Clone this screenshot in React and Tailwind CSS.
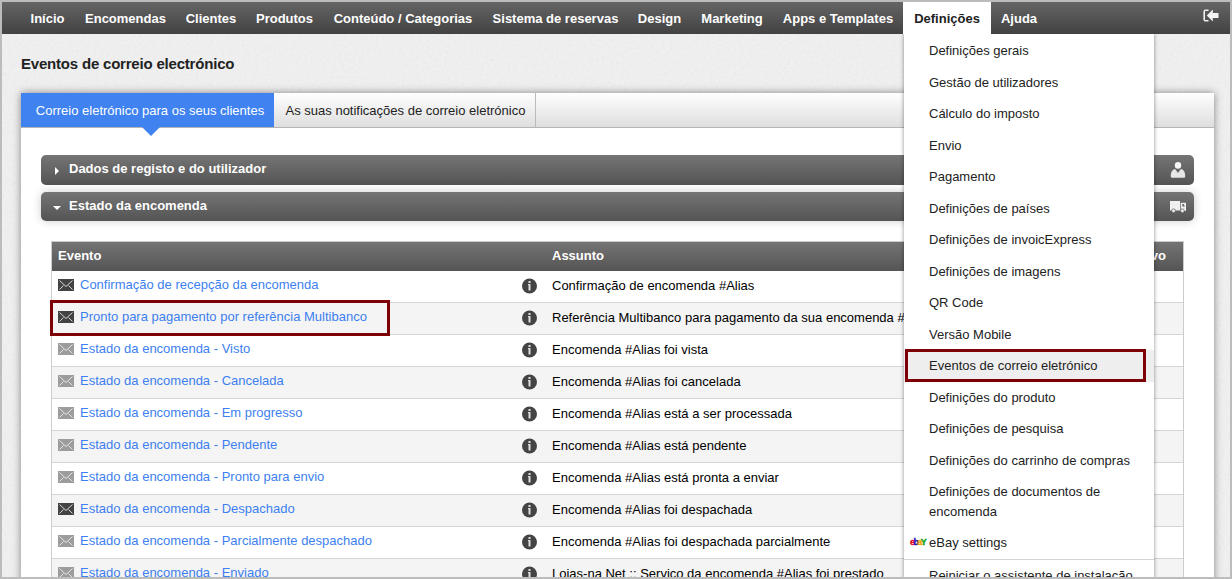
const menu = [
  { label: 'Início', width: 'w-[55px]' },
  { label: 'Encomendas', width: 'w-[101px]' },
  { label: 'Clientes', width: 'w-[70px]' },
  { label: 'Produtos', width: 'w-[77px]' },
  { label: 'Conteúdo / Categorias', width: 'w-[160px]' },
  { label: 'Sistema de reservas', width: 'w-[145px]' },
  { label: 'Design', width: 'w-[63px]' },
  { label: 'Marketing', width: 'w-[82px]' },
  { label: 'Apps e Templates', width: 'w-[130px]' },
  { label: 'Definições', width: 'w-[88px]', active: true },
  { label: 'Ajuda', width: 'w-[56px]' },
];

const settings = [
  { label: 'Definições gerais' },
  { label: 'Gestão de utilizadores' },
  { label: 'Cálculo do imposto' },
  { label: 'Envio' },
  { label: 'Pagamento' },
  { label: 'Definições de países' },
  { label: 'Definições de invoicExpress' },
  { label: 'Definições de imagens' },
  { label: 'QR Code' },
  { label: 'Versão Mobile' },
  { label: 'Eventos de correio eletrónico', current: true },
  { label: 'Definições do produto' },
  { label: 'Definições de pesquisa' },
  { label: 'Definições do carrinho de compras' },
  { label: 'Definições de documentos de encomenda' },
  { label: 'eBay settings', ebay: true },
  { label: 'Reiniciar o assistente de instalação', divider: true },
];

const events = [
  { name: 'Confirmação de recepção da encomenda', subject: 'Confirmação de encomenda #Alias', on: true },
  {
    name: 'Pronto para pagamento por referência Multibanco',
    subject: 'Referência Multibanco para pagamento da sua encomenda #Alias',
    on: true,
    marked: true,
  },
  { name: 'Estado da encomenda - Visto', subject: 'Encomenda #Alias foi vista' },
  { name: 'Estado da encomenda - Cancelada', subject: 'Encomenda #Alias foi cancelada' },
  { name: 'Estado da encomenda - Em progresso', subject: 'Encomenda #Alias está a ser processada' },
  { name: 'Estado da encomenda - Pendente', subject: 'Encomenda #Alias está pendente' },
  { name: 'Estado da encomenda - Pronto para envio', subject: 'Encomenda #Alias está pronta a enviar' },
  { name: 'Estado da encomenda - Despachado', subject: 'Encomenda #Alias foi despachada', on: true },
  { name: 'Estado da encomenda - Parcialmente despachado', subject: 'Encomenda #Alias foi despachada parcialmente' },
  { name: 'Estado da encomenda - Enviado', subject: 'Lojas-na Net :: Serviço da encomenda #Alias foi prestado' },
];

function MailIcon({ on }) {
  return (
    <svg className="block h-3 w-4 shrink-0" viewBox="0 0 16 12">
      <rect width="16" height="12" fill={on ? '#434343' : '#9c9c9c'} />
      <path
        d="M1.5 1.5 8 7.5l6.5-6M1.5 10.5l4-4M14.5 10.5l-4-4"
        fill="none"
        stroke={on ? '#d6d6d6' : '#e4e4e4'}
        strokeWidth="1"
      />
    </svg>
  );
}

function InfoIcon() {
  return (
    <svg className="block size-4 shrink-0" viewBox="0 0 16 16">
      <circle cx="8.500" cy="8" r="7.500" fill="#444" />
      <path d="M7.500 3h2v2h-2zM7 6h2.500v6.500h-2V7H7z" fill="#e0e0e0" />
    </svg>
  );
}

function UserIcon() {
  return (
    <svg className="block h-[17px] w-4" viewBox="0 0 16 17">
      <ellipse cx="8" cy="3.4" rx="3.2" ry="3.3" fill="#f6f6f6" />
      <path
        d="M.8 14.500C.6 10 2.300 7.500 5.100 6.900L8 11l2.900-4.100C13.700 7.500 15.400 10 15.200 14.500q0 1.300-1.500 1.300H2.300Q.8 15.800.8 14.500z"
        fill="#e6e6e6"
      />
    </svg>
  );
}

function TruckIcon() {
  return (
    <svg className="block h-3 w-4" viewBox="0 0 16 12">
      <path d="M0 0h10v9.500H0z" fill="#efefef" />
      <path d="M10.700 1.800H16V10h-5.300z" fill="#efefef" />
      <path d="M12.300 3h1.500l1 2.500h-2.500z" fill="#666" />
      <circle cx="3.6" cy="9.8" r="1.900" fill="#efefef" stroke="#666" strokeWidth=".8" />
      <circle cx="12.4" cy="9.8" r="1.900" fill="#efefef" stroke="#666" strokeWidth=".8" />
    </svg>
  );
}

function LogoutIcon() {
  return (
    <svg className="block h-[13px] w-4" viewBox="0 0 16 13">
      <path d="M5.500 1.300H2.500Q1.200 1.300 1.200 2.600v7.800q0 1.300 1.300 1.300h3" fill="none" stroke="#eee" strokeWidth="1.600" />
      <path d="M3.800 6.500 9.800.500v3.600h5.700v4.800H9.800v3.600z" fill="#f4f4f4" />
    </svg>
  );
}

function EbayLogo() {
  return (
    <span className="absolute left-1.5 top-2 flex text-[9px] font-bold leading-[12px] tracking-[-1.6px] [-webkit-text-stroke:0.4px]">
      <span className="text-[#e00010]">e</span>
      <span className="text-[#2a10b0]">b</span>
      <span className="text-[#f0a000]">a</span>
      <span className="text-[#10a010]">Y</span>
    </span>
  );
}

function Section({ title, open, icon }) {
  return (
    <div
      className={`flex items-center justify-between rounded-[5px] bg-linear-to-b from-[#757575] to-[#545454] pr-2 text-[13px] font-bold text-white ${
        open ? 'h-[29px] shadow-[0_0_10px_rgba(0,0,0,0.2)]' : 'h-[30px]'
      }`}
    >
      <div className="flex items-center">
        <svg className="ml-3 mt-0.5 block size-2" viewBox="0 0 8 8">
          <path d={open ? 'M0 2h8L4 6z' : 'M2 0v8l4-4z'} fill="#fff" />
        </svg>
        <span className="-mt-0.5 ml-2">{title}</span>
      </div>
      {icon}
    </div>
  );
}

function SettingsMenu() {
  return (
    <div className="absolute left-[902px] top-8 z-20 w-[250px] bg-white pt-[1.3px] shadow-[0_0_4px_rgba(0,0,0,0.45)] [clip-path:inset(0_-8px_-8px_-8px)]">
      {settings.map(({ label, current, ebay, divider }) => (
        <div
          key={label}
          className={`relative pl-[25px] pr-4 leading-5 ${ebay ? 'pb-[6.5px] pt-[5px]' : 'py-[5.75px]'} ${
            current ? 'bg-[#eee]' : ''
          } ${divider ? 'border-t border-[#d5d5d5]' : ''}`}
        >
          {ebay && <EbayLogo />}
          {label}
          {current && <div className="absolute -top-px left-px h-[33px] w-[241px] border-3 border-[#7d0006]" />}
        </div>
      ))}
    </div>
  );
}

export default function App() {
  return (
    <div className="h-[579px] w-[1232px] overflow-hidden border-2 border-[#bcbcbc] bg-[#f1f1f1] font-['Liberation_Sans',Arial,sans-serif] text-[13px] text-[#222]">
      <div className="relative h-full overflow-hidden">
        {/* Paper grain behind the page */}
        <svg className="absolute inset-0 size-full opacity-10">
          <filter id="grain">
            <feTurbulence type="fractalNoise" baseFrequency="0.35" numOctaves="2" />
            <feColorMatrix type="saturate" values="0" />
          </filter>
          <rect width="100%" height="100%" filter="url(#grain)" />
        </svg>

        {/* Top navigation */}
        <nav className="relative flex h-8 justify-between bg-linear-to-b from-[#656565] to-[#424242] font-bold text-white">
          <div className="flex pl-[18px]">
            {menu.map(({ label, width, active }) => (
              <a
                key={label}
                className={`flex h-8 shrink-0 items-center justify-center whitespace-nowrap pt-0.5 ${width} ${
                  active ? 'bg-white text-[#222]' : ''
                }`}
              >
                {label}
              </a>
            ))}
          </div>
          <div className="pr-[11px] pt-[7px]">
            <LogoutIcon />
          </div>
        </nav>
        <SettingsMenu />

        <main className="relative px-[19px]">
          <h1 className="h-[59px] pt-5 text-[15px] font-bold leading-5 tracking-[-0.2px]">Eventos de correio electrónico</h1>

          <div className="h-[520px] w-[1193px] bg-white shadow-[0_0_8px_rgba(0,0,0,0.45)]">
            {/* Tabs */}
            <div className="flex h-[35px] border-b border-[#b5b5b5] bg-linear-to-b from-white to-[#dedede]">
              <div className="relative flex h-[34px] w-[253px] items-center justify-center bg-[#3f82f0] pl-[5px] pt-0.5 text-white">
                Correio eletrónico para os seus clientes
                <div className="absolute left-[121px] top-[34px] border-x-[9px] border-t-[9px] border-x-transparent border-t-[#3f82f0]" />
              </div>
              <div className="flex w-[262px] items-center justify-center border-r border-[#bbb] pl-0.5 pt-0.5">
                As suas notificações de correio eletrónico
              </div>
            </div>

            <div className="px-5 pt-[27px]">
              <div className="flex flex-col gap-[7px]">
                <Section title="Dados de registo e do utilizador" icon={<UserIcon />} />
                <Section title="Estado da encomenda" open icon={<TruckIcon />} />
              </div>

              {/* Event list */}
              <div className="ml-2.5 mt-5 w-[1133px] border border-[#ccc]">
                <div className="flex h-[29px] items-center bg-linear-to-b from-[#747474] to-[#555] pb-0.5 font-bold text-white">
                  <span className="w-[500px] pl-1.5">Evento</span>
                  <span className="grow">Assunto</span>
                  <span className="pr-[17px]">Ativo</span>
                </div>
                {events.map(({ name, subject, on, marked }) => (
                  <div
                    key={name}
                    className={`relative flex h-8 items-center border-b border-[#d5d5d5] bg-white odd:bg-[#f4f4f4] ${
                      marked ? 'z-10' : ''
                    }`}
                  >
                    <div className="flex w-[464px] items-center gap-1.5 pb-1 pl-1.5 text-[#3d7ff0]">
                      <MailIcon on={on} />
                      {name}
                    </div>
                    <div className="w-9 pb-px pl-[5px]">
                      <InfoIcon />
                    </div>
                    <div className="whitespace-nowrap pb-px text-black">{subject}</div>
                    {marked && <div className="absolute -left-0.5 -top-[3px] h-9 w-[340px] border-3 border-[#7d0006]" />}
                  </div>
                ))}
              </div>
            </div>
          </div>
        </main>
      </div>
    </div>
  );
}
